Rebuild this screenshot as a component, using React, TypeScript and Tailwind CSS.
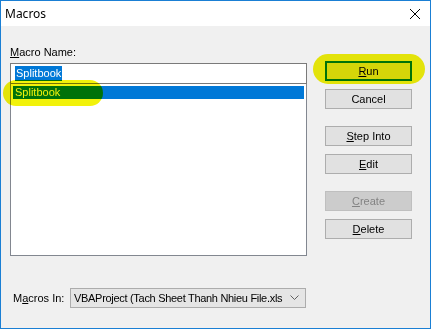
const base = "flex h-[20px] w-[87px] items-center justify-center";
const btn = `${base} border border-[#adadad] bg-[#e1e1e1] text-black`;

function U({ children }: { children: string }) {
  return <span className="underline underline-offset-[1px]">{children}</span>;
}

export default function App() {
  return (
    <div className="relative flex h-[329px] w-[431px] flex-col border border-[#1a7fd4] bg-[#f0f0f0] font-['Liberation_Sans',Arial,sans-serif] text-[11px] leading-[13px] text-black">
      {/* Title bar */}
      <div className="flex h-[25px] items-center justify-between bg-white pl-[4px] pr-[9px]">
        <span className="font-['Noto_Sans',sans-serif] text-[12px]">Macros</span>
        <svg width="12" height="12" viewBox="0 0 12 12" className="text-black">
          <path d="M1 1 L11 11 M11 1 L1 11" stroke="currentColor" strokeWidth="1" />
        </svg>
      </div>

      {/* Body */}
      <div className="flex flex-1 pl-[9px]">
        <div className="flex w-[297px] flex-col">
          <div className="mt-[20px]">
            <U>M</U>acro Name:
          </div>
          <div className="mt-[4px] flex h-[21px] items-center border border-[#7a7a7a] bg-white pl-[4px]">
            <span className="bg-[#0078d7] px-[1px] py-[1px] text-white">Splitbook</span>
          </div>
          <div className="h-[172px] border border-t-0 border-[#828790] bg-white p-[2px]">
            <div className="flex h-[13px] items-center bg-[#0078d7] pl-[2px] text-white">Splitbook</div>
          </div>

          <div className="mt-auto mb-[20px] flex items-center">
            <span className="w-[60px] pl-[3px]">
              M<U>a</U>cros In:
            </span>
            <div className="flex h-[20px] w-[236px] items-center justify-between overflow-hidden border border-[#acacac] bg-[#e5e5e5] pl-[3px] pr-[6px]">
              <span className="whitespace-nowrap tracking-[-0.3px]">
                VBAProject (Tach Sheet Thanh Nhieu File.xls
              </span>
              <svg width="9" height="6" viewBox="0 0 9 6" className="ml-[4px] shrink-0">
                <path d="M0.5 0.5 L4.5 4.5 L8.5 0.5" fill="none" stroke="#606060" strokeWidth="1" />
              </svg>
            </div>
          </div>
        </div>

        <div className="ml-[18px] flex flex-col pt-[35px]">
          <div className={`${base} border-2 border-[#0078d7] bg-[#e1e1e1]`}>
            <U>R</U>un
          </div>
          <div className={`${btn} mt-[8px]`}>Cancel</div>
          <div className={`${btn} mt-[17px]`}>
            <U>S</U>tep Into
          </div>
          <div className={`${btn} mt-[8px]`}>
            <U>E</U>dit
          </div>
          <div className={`${base} mt-[17px] border border-[#bfbfbf] bg-[#cccccc] text-[#838383]`}>
            <U>C</U>reate
          </div>
          <div className={`${btn} mt-[8px]`}>
            <U>D</U>elete
          </div>
        </div>
      </div>

      {/* Highlighter marks */}
      <div className="pointer-events-none absolute left-[2px] top-[79px] h-[26px] w-[100px] rounded-full bg-[#f2f20a] mix-blend-multiply" />
      <div className="pointer-events-none absolute left-[312px] top-[53px] h-[30px] w-[112px] rounded-full bg-[#f2f20a] mix-blend-multiply" />
    </div>
  );
}
